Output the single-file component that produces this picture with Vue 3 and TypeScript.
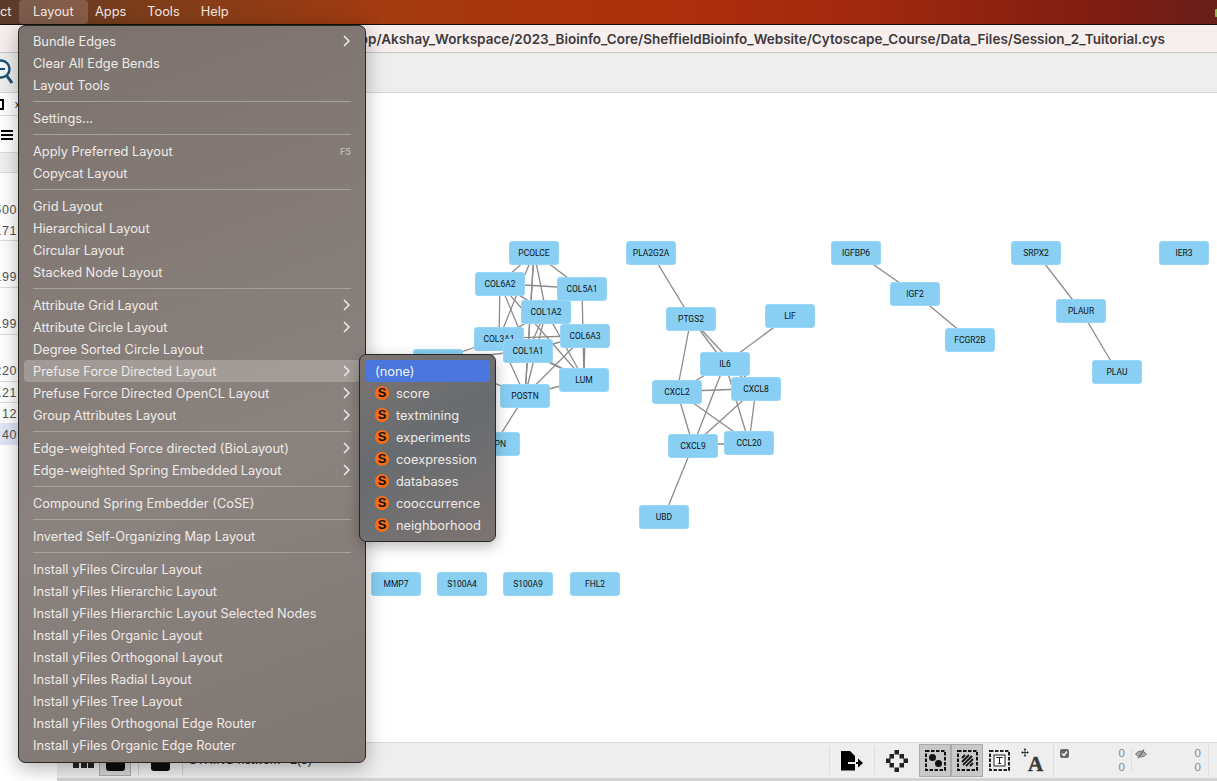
<template>
  <div class="desktop">
    <div class="menubar">
      <span class="bar-item cut">ct</span>
      <span class="bar-item active">Layout</span>
      <span class="bar-item">Apps</span>
      <span class="bar-item">Tools</span>
      <span class="bar-item">Help</span>
    </div>
    <div class="window">
      <div class="titlebar">
        <span class="path">/Users/akshay/Desktop/Akshay_Workspace/2023_Bioinfo_Core/SheffieldBioinfo_Website/Cytoscape_Course/Data_Files/Session_2_Tuitorial.cys</span>
      </div>
      <div class="toolbar">
        <svg class="zoom-icon" width="20" height="32" viewBox="0 0 20 32">
          <circle cx="1" cy="15" r="8.500" fill="#f4f8fb" stroke="#1c4f74" stroke-width="2.400" />
          <path d="M-3 15h8" stroke="#1c4f74" stroke-width="2" />
          <path d="M7 22l5 7" stroke="#1c4f74" stroke-width="3" />
        </svg>
      </div>
      <div class="main">
        <aside class="side">
          <div class="side-tabs"><span class="tab-box"></span><span class="tab-x">x</span></div>
          <div class="side-head"><span class="burger"></span></div>
          <div class="side-col"></div>
          <div
            v-for="row in tableRows"
            :key="row.id"
            class="side-row"
            :class="{ picked: row.picked, ruled: row.ruled }"
            :style="{ height: row.height + 'px' }"
          >{{ row.value }}</div>
        </aside>
        <div class="canvas">
          <svg class="edges" width="1217" height="781">
            <line
              v-for="(edge, index) in edgeLines"
              :key="index"
              :x1="edge.x1"
              :y1="edge.y1"
              :x2="edge.x2"
              :y2="edge.y2"
            />
          </svg>
          <div
            v-for="node in nodes"
            :key="node.name"
            class="node"
            :style="{ left: node.x + 'px', top: node.y + 'px' }"
          >{{ node.name }}</div>
        </div>
      </div>
      <div class="statusbar">
        <div class="status-left">
          <div class="view-switch">
            <span class="dots"><i></i><i></i><i></i></span>
            <span class="view-on"><span class="black-btn"></span></span>
          </div>
          <span class="black-btn second"></span>
          <span class="net-name">STRING network - 2(3)</span>
        </div>
        <div class="status-right">
          <span class="st-cell export">
            <svg width="22" height="20" viewBox="0 0 22 20">
              <path d="M0 0h9l5 5v14.500H0z" fill="#000" />
              <path d="M7 11h7.500v2H7z" fill="#eee" />
              <path d="M15 11h2V7.500l5 4.500-5 4.500V13h-2z" fill="#000" />
            </svg>
          </span>
          <span class="st-cell">
            <svg width="22" height="22" viewBox="0 0 22 22">
              <path d="M8.500 0H13v4.500H8.500zM3.500 4H8v4.500H3.500zM13.500 4H18v4.500h-4.500zM0 8.500h4.500V13H0zM17.500 8.500H22V13h-4.500zM3.500 13H8v4.500H3.500zM13.500 13H18v4.500h-4.500zM8.500 17.500H13V22H8.500z" fill="#222" />
            </svg>
          </span>
          <span class="toggle on">
            <svg width="21" height="21" viewBox="0 0 21 21">
              <rect x="1" y="1" width="19" height="19" fill="none" stroke="#111" stroke-width="2" stroke-dasharray="3.500 1.500" />
              <circle cx="7.500" cy="7.500" r="3.500" fill="#111" />
              <circle cx="13.500" cy="13.500" r="3.500" fill="#111" />
            </svg>
          </span>
          <span class="toggle on">
            <svg width="21" height="21" viewBox="0 0 21 21">
              <rect x="1" y="1" width="19" height="19" fill="none" stroke="#111" stroke-width="2" stroke-dasharray="3.500 1.500" />
              <path d="M5 8l3-3M5 12l7-7M6 15l9-9M9 16l7-7M13 16l3-3" stroke="#111" stroke-width="1.800" />
            </svg>
          </span>
          <span class="toggle">
            <svg width="21" height="21" viewBox="0 0 21 21">
              <rect x="1" y="1" width="19" height="19" fill="none" stroke="#222" stroke-width="2" stroke-dasharray="3.500 1.500" />
              <rect x="5" y="5" width="11" height="11" fill="#fff" stroke="#222" />
              <path d="M7.500 8V7.500h6V8M10.500 7.500v6M9 13.500h3" stroke="#222" stroke-width="1" fill="none" />
            </svg>
          </span>
          <span class="text-a">
            <svg width="8" height="9" viewBox="0 0 8 9">
              <path d="M4 0l1.500 2H4.500v2H6V3l2 1.500L6 6V5H4.500v2h1L4 9 2.500 7h1V5H2v1L0 4.500 2 3v1h1.500V2h-1z" fill="#333" />
            </svg>
            <b>A</b>
          </span>
          <div class="counts">
            <div class="count-col">
              <svg class="count-icon" width="9" height="9" viewBox="0 0 9 9">
                <rect width="9" height="9" rx="2" fill="#666" />
                <path d="M2 4.500l2 2 3-4" stroke="#fff" stroke-width="1.400" fill="none" />
              </svg>
              <div class="nums"><span>0</span><span>0</span></div>
            </div>
            <div class="count-col second">
              <svg class="count-icon" width="12" height="10" viewBox="0 0 12 10">
                <path d="M0.500 5q5-6 11 0q-5 6-11 0z" fill="#aaa" stroke="#777" />
                <path d="M3 9.500l6-9" stroke="#666" stroke-width="1.200" />
              </svg>
              <div class="nums"><span>0</span><span>0</span></div>
            </div>
          </div>
        </div>
      </div>
      <div class="window-foot"></div>
    </div>

    <div class="menu">
      <template v-for="(group, gi) in layoutMenu" :key="gi">
        <div v-if="gi > 0" class="divider"></div>
        <div
          v-for="item in group"
          :key="item.label"
          class="menu-item"
          :class="{ hovered: item.label === 'Prefuse Force Directed Layout' }"
        >
          <span>{{ item.label }}</span>
          <span v-if="item.key" class="shortcut">{{ item.key }}</span>
          <svg v-if="item.more" class="chevron" width="7" height="12" viewBox="0 0 7 12">
            <path d="M1 1l5 5-5 5" fill="none" stroke="#eee" stroke-width="1.500" />
          </svg>
        </div>
      </template>
    </div>

    <div class="submenu">
      <div class="sub-item selected">(none)</div>
      <div v-for="name in stringScores" :key="name" class="sub-item">
        <span class="s-badge">S</span>
        <span>{{ name }}</span>
      </div>
    </div>

    <span class="corner-dot"></span>
  </div>
</template>

<script setup lang="ts">
import { computed } from 'vue'

interface MenuItem {
  label: string
  more?: boolean
  key?: string
}

interface NetNode {
  name: string
  x: number
  y: number
}

const layoutMenu: MenuItem[][] = [
  [{ label: 'Bundle Edges', more: true }, { label: 'Clear All Edge Bends' }, { label: 'Layout Tools' }],
  [{ label: 'Settings...' }],
  [{ label: 'Apply Preferred Layout', key: 'F5' }, { label: 'Copycat Layout' }],
  [
    { label: 'Grid Layout' },
    { label: 'Hierarchical Layout' },
    { label: 'Circular Layout' },
    { label: 'Stacked Node Layout' }
  ],
  [
    { label: 'Attribute Grid Layout', more: true },
    { label: 'Attribute Circle Layout', more: true },
    { label: 'Degree Sorted Circle Layout' },
    { label: 'Prefuse Force Directed Layout', more: true },
    { label: 'Prefuse Force Directed OpenCL Layout', more: true },
    { label: 'Group Attributes Layout', more: true }
  ],
  [
    { label: 'Edge-weighted Force directed (BioLayout)', more: true },
    { label: 'Edge-weighted Spring Embedded Layout', more: true }
  ],
  [{ label: 'Compound Spring Embedder (CoSE)' }],
  [{ label: 'Inverted Self-Organizing Map Layout' }],
  [
    { label: 'Install yFiles Circular Layout' },
    { label: 'Install yFiles Hierarchic Layout' },
    { label: 'Install yFiles Hierarchic Layout Selected Nodes' },
    { label: 'Install yFiles Organic Layout' },
    { label: 'Install yFiles Orthogonal Layout' },
    { label: 'Install yFiles Radial Layout' },
    { label: 'Install yFiles Tree Layout' },
    { label: 'Install yFiles Orthogonal Edge Router' },
    { label: 'Install yFiles Organic Edge Router' }
  ]
]

const stringScores = ['score', 'textmining', 'experiments', 'coexpression', 'databases', 'cooccurrence', 'neighborhood']

const tableRows = [
  { id: 1, height: 25, value: '' },
  { id: 2, height: 22, value: '500' },
  { id: 3, height: 21, value: '171', ruled: true },
  { id: 4, height: 24, value: '' },
  { id: 5, height: 23, value: '199', ruled: true },
  { id: 6, height: 24, value: '' },
  { id: 7, height: 23, value: '199', ruled: true },
  { id: 8, height: 25, value: '' },
  { id: 9, height: 22, value: '220', ruled: true },
  { id: 10, height: 21, value: '121', ruled: true },
  { id: 11, height: 20, value: '12' },
  { id: 12, height: 22, value: '40', picked: true }
]

// node positions are the top-left corner of each box, in page pixels
const nodes: NetNode[] = [
  { name: 'SPARC', x: 413, y: 349 },
  { name: 'PCOLCE', x: 509, y: 241 },
  { name: 'COL6A2', x: 475, y: 272 },
  { name: 'COL5A1', x: 557, y: 277 },
  { name: 'COL3A1', x: 474, y: 327 },
  { name: 'COL1A2', x: 521, y: 300 },
  { name: 'COL6A3', x: 560, y: 324 },
  { name: 'COL1A1', x: 503, y: 339 },
  { name: 'LUM', x: 559, y: 368 },
  { name: 'POSTN', x: 500, y: 384 },
  { name: 'ASPN', x: 470, y: 432 },
  { name: 'PLA2G2A', x: 626, y: 241 },
  { name: 'PTGS2', x: 666, y: 307 },
  { name: 'LIF', x: 765, y: 304 },
  { name: 'IL6', x: 700, y: 352 },
  { name: 'CXCL2', x: 652, y: 380 },
  { name: 'CXCL8', x: 731, y: 377 },
  { name: 'CXCL9', x: 668, y: 434 },
  { name: 'CCL20', x: 724, y: 431 },
  { name: 'UBD', x: 639, y: 505 },
  { name: 'IGFBP6', x: 831, y: 241 },
  { name: 'IGF2', x: 890, y: 282 },
  { name: 'FCGR2B', x: 945, y: 328 },
  { name: 'SRPX2', x: 1011, y: 241 },
  { name: 'PLAUR', x: 1056, y: 299 },
  { name: 'PLAU', x: 1092, y: 360 },
  { name: 'IER3', x: 1159, y: 241 },
  { name: 'MMP7', x: 371, y: 572 },
  { name: 'S100A4', x: 437, y: 572 },
  { name: 'S100A9', x: 503, y: 572 },
  { name: 'FHL2', x: 570, y: 572 }
]

const edges: [string, string][] = [
  ['PCOLCE', 'COL6A2'], ['PCOLCE', 'COL5A1'], ['PCOLCE', 'COL1A2'], ['PCOLCE', 'COL3A1'], ['PCOLCE', 'COL1A1'],
  ['PCOLCE', 'POSTN'], ['COL6A2', 'COL5A1'], ['COL6A2', 'COL1A2'], ['COL6A2', 'COL3A1'], ['COL6A2', 'COL1A1'],
  ['COL6A2', 'LUM'], ['COL5A1', 'COL1A2'], ['COL5A1', 'LUM'], ['COL1A2', 'COL6A3'], ['COL1A2', 'COL3A1'],
  ['COL1A2', 'COL1A1'], ['COL1A2', 'LUM'], ['COL1A2', 'POSTN'], ['COL6A3', 'COL3A1'], ['COL6A3', 'COL1A1'],
  ['COL6A3', 'LUM'], ['COL6A3', 'POSTN'], ['COL3A1', 'COL1A1'], ['COL3A1', 'LUM'], ['COL3A1', 'POSTN'],
  ['COL1A1', 'LUM'], ['COL1A1', 'POSTN'], ['LUM', 'POSTN'], ['POSTN', 'ASPN'], ['SPARC', 'COL3A1'],
  ['SPARC', 'COL1A1'], ['SPARC', 'POSTN'], ['PLA2G2A', 'PTGS2'], ['PTGS2', 'IL6'], ['PTGS2', 'CXCL2'],
  ['PTGS2', 'CXCL8'], ['LIF', 'IL6'], ['IL6', 'CXCL2'], ['IL6', 'CXCL8'], ['IL6', 'CXCL9'],
  ['IL6', 'CCL20'], ['CXCL2', 'CXCL8'], ['CXCL2', 'CXCL9'], ['CXCL2', 'CCL20'], ['CXCL8', 'CXCL9'],
  ['CXCL8', 'CCL20'], ['CXCL9', 'CCL20'], ['CXCL9', 'UBD'], ['IGFBP6', 'IGF2'], ['IGF2', 'FCGR2B'],
  ['SRPX2', 'PLAUR'], ['PLAUR', 'PLAU']
]

const edgeLines = computed(() => {
  const byName = new Map(nodes.map((n) => [n.name, n]))
  return edges.map(([a, b]) => {
    const from = byName.get(a)!
    const to = byName.get(b)!
    return { x1: from.x + 25, y1: from.y + 11.5, x2: to.x + 25, y2: to.y + 11.5 }
  })
})
</script>

<style scoped>
.desktop {
  position: relative;
  width: 1217px;
  height: 781px;
  overflow: hidden;
  display: flex;
  flex-direction: column;
  background: #fff;
  font-family: "Inter", "Liberation Sans", sans-serif;
}

.menubar {
  height: 25px;
  box-sizing: border-box;
  flex: none;
  display: flex;
  align-items: flex-start;
  color: #f4e8e0;
  font-size: 12.8px;
  background: linear-gradient(90deg, #5c3a2c 0%, #7d3d1a 12%, #a43a10 32%, #ae2f0c 55%, #a0280e 72%, #7c1c12 92%, #6a1f1a 100%);
  border-bottom: 1px solid #111;
}

.bar-item {
  height: 24px;
  line-height: 23px;
  padding: 0 14px 0 7px;
}

.bar-item.cut {
  width: 12px;
  padding: 0 7px 0 0;
}

.bar-item.active {
  width: 69px;
  box-sizing: border-box;
  padding-left: 14px;
  background: rgba(255, 255, 255, 0.17);
  border-radius: 4px;
}

.window {
  flex: 1;
  min-height: 0;
  display: flex;
  flex-direction: column;
}

.titlebar {
  height: 28px;
  flex: none;
  box-sizing: border-box;
  display: flex;
  justify-content: flex-end;
  align-items: center;
  padding-right: 52px;
  background: #f7eeee;
  border-bottom: 1px solid #c8c4c4;
}

.path {
  font-size: 13.5px;
  font-weight: 600;
  color: #3d3a3a;
  white-space: nowrap;
}

.toolbar {
  height: 40px;
  flex: none;
  box-sizing: border-box;
  background: #eee;
  border-bottom: 1px solid #d6d6d6;
  overflow: hidden;
}

.zoom-icon {
  display: block;
  margin-top: 1px;
  overflow: hidden;
}

.main {
  position: relative;
  flex: 1;
  min-height: 0;
  display: flex;
}

.side {
  width: 57px;
  flex: none;
  background: #fff;
  font-family: "Liberation Sans", sans-serif;
  font-size: 12.5px;
  letter-spacing: 0.6px;
  color: #555;
}

.side-tabs {
  height: 23px;
  box-sizing: border-box;
  display: flex;
  align-items: center;
  gap: 11px;
  border-bottom: 1px solid #ddd;
}

.tab-box {
  width: 2px;
  height: 7px;
  border: 2px solid #000;
  border-left: none;
}

.tab-x {
  color: #222;
  font-size: 10px;
}

.side-head {
  height: 37px;
  box-sizing: border-box;
  padding: 14px 0 0 1px;
  border-bottom: 1px solid #ddd;
}

.burger {
  display: block;
  position: relative;
  width: 12px;
  height: 10px;
  box-sizing: border-box;
  border-top: 2px solid #000;
  border-bottom: 2px solid #000;
}

.burger::after {
  content: "";
  position: absolute;
  left: 0;
  right: 0;
  top: 2px;
  height: 2px;
  background: #000;
}

.side-col {
  height: 20px;
  background: #f0f0f0;
  border-bottom: 1px solid #ddd;
  box-sizing: border-box;
}

.side-row {
  box-sizing: border-box;
  display: flex;
  align-items: center;
  justify-content: flex-end;
  padding: 1px 40px 0 0;
  white-space: nowrap;
}

.side-row.ruled {
  border-bottom: 1px solid #ddd;
}

.side-row.picked {
  background: #dfe6f6;
}

.canvas {
  flex: 1;
  background: #fff;
}

.edges {
  position: absolute;
  left: 0;
  top: -93px;
  pointer-events: none;
}

.edges line {
  stroke: #8b8b8b;
  stroke-width: 1.300;
}

.node {
  position: absolute;
  width: 50px;
  height: 24px;
  margin-top: -93px;
  box-sizing: border-box;
  display: flex;
  align-items: center;
  justify-content: center;
  border: 1px solid #97d6f6;
  border-radius: 3px;
  background: #89cff3;
  color: #111;
  font-family: "Roboto", "Liberation Sans", sans-serif;
  font-size: 8.5px;
}

.statusbar {
  height: 36px;
  flex: none;
  margin-left: 57px;
  box-sizing: border-box;
  display: flex;
  justify-content: space-between;
  background: #eee;
  border-top: 1px solid #d8d8d8;
}

.status-left {
  display: flex;
  align-items: center;
  padding-left: 16px;
}

.view-switch {
  display: flex;
  align-items: center;
  gap: 5px;
  height: 29px;
  padding-right: 7px;
  border-right: 1px solid #ccc;
}

.dots {
  display: flex;
  gap: 1.500px;
  width: 21px;
  margin-top: 10px;
}

.dots i {
  width: 6px;
  height: 5px;
  background: #222;
}

.view-on {
  width: 32px;
  height: 31px;
  box-sizing: border-box;
  display: flex;
  align-items: center;
  justify-content: center;
  background: #d4d4d4;
  border: 1px solid #aaa;
}

.black-btn {
  display: block;
  width: 19px;
  height: 20px;
  background: #0b0b0b;
  border-radius: 3px;
}

.black-btn.second {
  margin: 0 12px;
}

.net-name {
  height: 29px;
  padding-left: 6px;
  border-left: 1px solid #ccc;
  font-family: "Liberation Sans", sans-serif;
  font-size: 12px;
  line-height: 29px;
  color: #222;
}

.status-right {
  width: 388px;
  box-sizing: border-box;
  display: flex;
  align-items: center;
  padding-right: 9px;
}

.st-cell {
  width: 44px;
  height: 29px;
  flex: none;
  display: flex;
  align-items: center;
  justify-content: center;
  border-left: 1px solid #ddd;
}

.st-cell svg {
  display: block;
}

.toggle {
  width: 32px;
  height: 33px;
  flex: none;
  box-sizing: border-box;
  display: flex;
  align-items: center;
  justify-content: center;
}

.toggle.on {
  background: #c8c8c8;
  border: 1px solid #aaa;
}

.text-a {
  width: 38px;
  height: 29px;
  flex: none;
  box-sizing: border-box;
  display: flex;
  align-items: flex-start;
  padding-left: 6px;
  color: #3a3a3a;
}

.text-a svg {
  margin-top: 2px;
}

.text-a b {
  font-family: "Liberation Serif", serif;
  font-size: 21px;
  line-height: 22px;
  margin: 7px 0 0 -1px;
  -webkit-text-stroke: 0.5px #3a3a3a;
}

.counts {
  flex: 1;
  height: 33px;
  display: flex;
  border-left: 1px solid #ddd;
  border-right: 1px solid #ddd;
}

.count-col {
  width: 77px;
  box-sizing: border-box;
  display: flex;
  justify-content: space-between;
  padding: 0 6px;
}

.count-col.second {
  flex: 1;
  height: 22px;
  margin-top: 5px;
  padding: 0 7px 0 3px;
  border-left: 1px solid #ddd;
}

.count-icon {
  margin-top: 5px;
}

.count-col.second .count-icon {
  margin-top: 0;
}

.nums {
  display: flex;
  flex-direction: column;
  margin-top: 2px;
  font-family: "Liberation Sans", sans-serif;
  font-size: 11.5px;
  line-height: 14px;
  color: #888;
  text-align: right;
}

.count-col.second .nums {
  margin-top: -3px;
}

.window-foot {
  height: 3px;
  flex: none;
  margin-left: 57px;
  background: #d4d4d4;
}

.menu {
  position: absolute;
  left: 18px;
  top: 25px;
  width: 348px;
  box-sizing: border-box;
  padding: 4px 5px 6px;
  border: 1px solid #2b2725;
  border-radius: 7px;
  background: linear-gradient(160deg, #7b726d 0%, #857c78 35%, #8a827e 60%, #807773 100%);
  box-shadow: 0 5px 20px rgba(0, 0, 0, 0.3);
  color: #efebe8;
  font-size: 12.8px;
}

.menu-item {
  height: 22px;
  display: flex;
  align-items: center;
  justify-content: space-between;
  padding: 0 9px;
  border-radius: 4px;
  white-space: nowrap;
}

.menu-item.hovered {
  background: rgba(255, 255, 255, 0.22);
}

.shortcut {
  font-size: 9px;
  font-weight: 600;
  color: #bdb7b3;
}

.chevron {
  margin-right: 1px;
}

.divider {
  height: 1px;
  margin: 5px 9px;
  background: #a7a09c;
}

.submenu {
  position: absolute;
  left: 359px;
  top: 354px;
  width: 137px;
  box-sizing: border-box;
  padding: 5px;
  border: 1px solid #2b2725;
  border-radius: 7px;
  background: linear-gradient(150deg, #7c7471 0%, #676c70 45%, #7d7371 100%);
  box-shadow: 0 4px 14px rgba(0, 0, 0, 0.28);
  color: #efebe8;
  font-size: 12.8px;
}

.sub-item {
  height: 22px;
  display: flex;
  align-items: center;
  gap: 7px;
  padding-left: 10px;
  white-space: nowrap;
}

.sub-item.selected {
  background: #4a76de;
  color: #f2f4fb;
  border-radius: 4px;
}

.s-badge {
  width: 14px;
  height: 14px;
  border-radius: 50%;
  background: #f96d14;
  color: #111;
  font-family: "Liberation Sans", sans-serif;
  font-size: 13px;
  font-weight: 700;
  line-height: 14px;
  text-align: center;
}

.corner-dot {
  position: absolute;
  right: 0;
  top: 9px;
  width: 2px;
  height: 8px;
  border-radius: 1px 0 0 1px;
  background: #86c440;
}
</style>
